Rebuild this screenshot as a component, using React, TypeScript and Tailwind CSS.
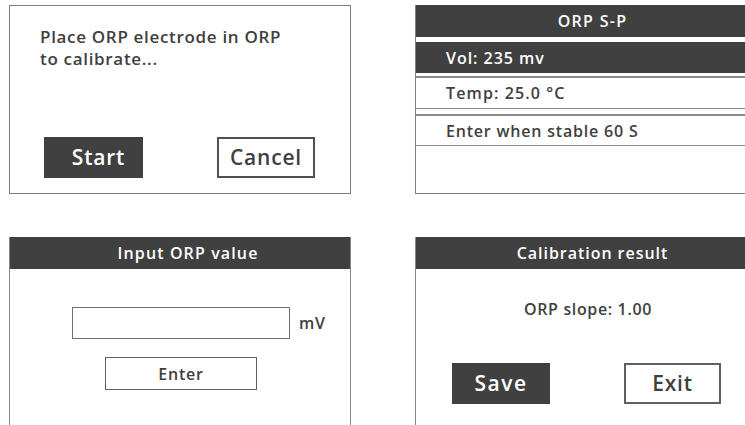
import React from "react";

const font = { fontFamily: '"Open Sans", "Liberation Sans", sans-serif' };

export default function App() {
  return (
    <div
      className="w-[745px] h-[425px] overflow-hidden bg-white text-[#404040] font-semibold tracking-[0.05em]"
      style={font}
    >
      <div className="grid grid-cols-[342px_354px] grid-rows-[189px_200px] gap-x-[64px] gap-y-[43px] pl-[9px] pt-[5px]">
        {/* Panel 1 */}
        <div className="border border-[#808080] flex flex-col">
          <div className="pl-[30px] pt-[20px] text-[17px] leading-[22px] tracking-[0.04em]">
            <div>Place ORP electrode in ORP</div>
            <div>to calibrate...</div>
          </div>
          <div className="flex justify-between pl-[34px] pr-[35px] mt-[67px]">
            <div className="w-[99px] h-[41px] bg-[#404040] text-white text-[21px] flex items-center justify-center pl-[10px]">
              Start
            </div>
            <div className="w-[98px] h-[41px] border-2 border-[#505050] text-[21px] flex items-center justify-center">
              Cancel
            </div>
          </div>
        </div>

        {/* Panel 2 */}
        <div className="border-l border-b border-[#808080] flex flex-col">
          <div className="h-[32px] bg-[#404040] text-white text-[16px] flex items-center justify-center tracking-[0.08em]">
            ORP S-P
          </div>
          <div className="mt-[5px] h-[31px] bg-[#404040] text-white text-[16px] flex items-center pl-[30px] tracking-[0.06em]">
            Vol: 235 mv
          </div>
          <div className="mt-[3px] h-[33px] border-t-2 border-b border-[#8a8a8a] text-[16px] flex items-center pl-[30px] tracking-[0.07em]">
            Temp: 25.0 °C
          </div>
          <div className="mt-[5px] h-[32px] border-t-2 border-b border-[#8a8a8a] text-[16px] flex items-center pl-[30px] tracking-[0.05em]">
            Enter when stable 60 S
          </div>
        </div>

        {/* Panel 3 */}
        <div className="border-l border-r border-[#8a8a8a] flex flex-col">
          <div className="h-[32px] bg-[#404040] text-white text-[16px] flex items-center justify-center pl-[16px] tracking-[0.07em]">
            Input ORP value
          </div>
          <div className="flex items-center mt-[38px] pl-[62px]">
            <div className="w-[218px] h-[32px] border border-[#707070]" />
            <div className="ml-[9px] text-[16px]">mV</div>
          </div>
          <div className="mt-[18px] ml-[95px] w-[152px] h-[33px] border border-[#606060] text-[16px] flex items-center justify-center">
            Enter
          </div>
        </div>

        {/* Panel 4 */}
        <div className="border-l border-[#8a8a8a] flex flex-col">
          <div className="h-[32px] bg-[#404040] text-white text-[16px] flex items-center justify-center tracking-[0.06em]">
            Calibration result
          </div>
          <div className="mt-[28px] text-[16px] text-center pr-[5px] tracking-[0.04em]">
            <span className="ml-[-4px]">ORP slope: 1.00</span>
          </div>
          <div className="flex mt-[42px] pl-[36px]">
            <div className="w-[98px] h-[41px] bg-[#404040] text-white text-[21px] flex items-center justify-center tracking-[0.07em]">
              Save
            </div>
            <div className="ml-[74px] w-[97px] h-[41px] border-2 border-[#606060] text-[21px] flex items-center justify-center">
              Exit
            </div>
          </div>
        </div>
      </div>
    </div>
  );
}
